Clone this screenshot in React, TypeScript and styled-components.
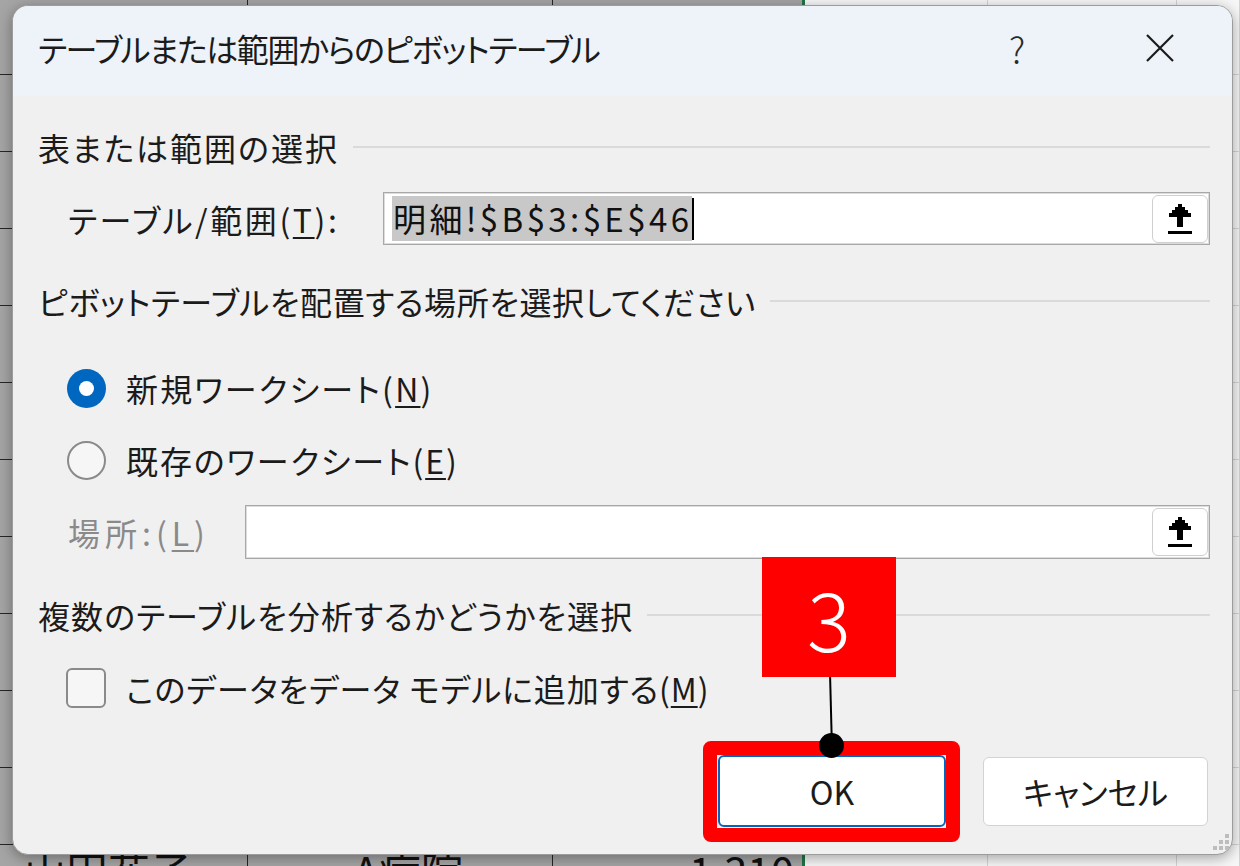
import React from "react";
import styled, { createGlobalStyle } from "styled-components";

const FONT = `"Noto Sans CJK JP", "Noto Sans", sans-serif`;

const Global = createGlobalStyle`
  html, body { margin: 0; padding: 0; width: 1240px; height: 866px; overflow: hidden; background: #f7f7f7; }
  #root { width: 1240px; height: 866px; }
  * { box-sizing: border-box; }
`;

const Page = styled.div`
  position: relative;
  width: 1240px;
  height: 866px;
  overflow: hidden;
  font-family: ${FONT};
  font-feature-settings: "palt";
  color: #1b1b1b;
`;

/* ---------- spreadsheet behind ---------- */
const Sheet = styled.div`
  display: grid;
  grid-template-columns: 248px 305px 252px 183px 189px 1fr;
  grid-auto-rows: 77px;
  margin-top: -2px;
`;

const Cell = styled.div<{ $sel?: boolean; $edge?: boolean; $align?: string }>`
  display: flex;
  align-items: flex-start;
  justify-content: ${(p) => p.$align || "flex-start"};
  padding: 0 8px 0 24px;
  background: ${(p) => (p.$sel ? "#a5a5a5" : "#f7f7f7")};
  border-right: ${(p) => (p.$edge ? "3px solid #217346" : p.$sel ? "1px solid #262626" : "1px solid #d4d4d4")};
  border-bottom: 1px solid ${(p) => (p.$sel ? "#262626" : "#d4d4d4")};
  font-size: 42px;
  line-height: 1.2;
  color: #111;
  white-space: nowrap;
`;

/* ---------- dialog ---------- */
const Dialog = styled.div`
  position: absolute;
  left: 12px;
  top: 5px;
  width: 1221px;
  height: 850px;
  border-radius: 16px;
  background: #f0f0f0;
  border: 1px solid #9c9c9c;
  box-shadow: 0 3px 14px rgba(0, 0, 0, 0.35);
  overflow: hidden;
  display: flex;
  flex-direction: column;
`;

const TitleBar = styled.div`
  height: 90px;
  flex: none;
  background: #eef3f9;
  display: flex;
  align-items: center;
  padding: 0 22px 6px 25px;
`;

const Text = styled.div<{ $ls?: number; $size?: number; $muted?: boolean }>`
  font-size: ${(p) => p.$size || 32}px;
  letter-spacing: ${(p) => p.$ls || 0}px;
  color: ${(p) => (p.$muted ? "#8a8a8a" : "#1b1b1b")};
  white-space: nowrap;
`;

const TitleButton = styled.div<{ $w: number }>`
  width: ${(p) => p.$w}px;
  height: 60px;
  display: flex;
  align-items: center;
  justify-content: center;
  font-size: 36px;
  font-weight: 300;
  color: #2a2a2a;
`;

const HelpButton = styled(TitleButton)`
  margin-left: auto;
  margin-right: 63px;
`;

const Body = styled.div`
  flex: 1;
  display: flex;
  flex-direction: column;
  padding: 26px 22px 0 25px;
  position: relative;
`;

const Row = styled.div<{ $mt?: number; $h?: number; $indent?: number; $gap?: number }>`
  display: flex;
  align-items: center;
  margin-top: ${(p) => p.$mt || 0}px;
  height: ${(p) => p.$h || 50}px;
  padding-left: ${(p) => p.$indent || 0}px;
  gap: ${(p) => p.$gap || 0}px;
  flex: none;
`;

const Rule = styled.div`
  flex: 1;
  height: 2px;
  background: #dadada;
  margin-left: 14px;
`;

const LabelCell = styled.div<{ $w: number }>`
  width: ${(p) => p.$w}px;
  flex: none;
`;

const U = styled.span`
  text-decoration: underline;
  text-underline-offset: 4px;
  text-decoration-thickness: 2px;
`;

const Input = styled.div`
  flex: 1;
  height: 100%;
  background: #fff;
  border: 1px solid #a8a8a8;
  box-shadow: inset 0 0 0 1px #dcdcdc;
  display: flex;
  align-items: center;
  padding: 0 1px 0 8px;
`;

const Selected = styled.span`
  background: #c8c8c8;
  font-size: 33px;
  letter-spacing: 3.4px;
  line-height: 45px;
  padding: 0 0 0 1px;
  color: #111;
`;

const Caret = styled.span`
  width: 2px;
  height: 42px;
  background: #000;
`;

const PickButton = styled.div`
  margin-left: auto;
  width: 56px;
  height: 48px;
  background: #fff;
  border: 1px solid #cfcfcf;
  border-radius: 6px;
  display: flex;
  align-items: center;
  justify-content: center;
`;

const Radio = styled.div<{ $on?: boolean }>`
  width: 39px;
  height: 39px;
  border-radius: 50%;
  flex: none;
  background: ${(p) => (p.$on ? "#0067c0" : "#f6f6f6")};
  border: ${(p) => (p.$on ? "none" : "2px solid #8a8a8a")};
  display: flex;
  align-items: center;
  justify-content: center;
  &::after {
    content: "";
    display: ${(p) => (p.$on ? "block" : "none")};
    width: 15px;
    height: 15px;
    border-radius: 50%;
    background: #fff;
  }
`;

const Check = styled.div`
  width: 40px;
  height: 40px;
  flex: none;
  border-radius: 6px;
  border: 2px solid #8a8a8a;
  background: #f6f6f6;
`;

const Buttons = styled.div`
  display: flex;
  justify-content: flex-end;
  align-items: center;
  gap: 37px;
  margin-top: 42px;
  padding-right: 2px;
  height: 72px;
`;

const Annotated = styled.div`
  position: relative;
  &::before {
    content: "";
    position: absolute;
    inset: -14px -14px -15px -15px;
    border: 14px solid #ff0000;
    border-radius: 8px;
    pointer-events: none;
  }
`;

const DialogButton = styled.div<{ $primary?: boolean }>`
  width: ${(p) => (p.$primary ? 228 : 225)}px;
  height: ${(p) => (p.$primary ? 72 : 69)}px;
  background: #fff;
  border: ${(p) => (p.$primary ? "2px solid #0067c0" : "1px solid #d3d3d3")};
  border-radius: 6px;
  display: flex;
  align-items: center;
  justify-content: center;
  font-size: 32px;
  color: #1b1b1b;
`;

const Callout = styled.div`
  position: absolute;
  left: 44px;
  top: -198px;
  width: 134px;
  height: 120px;
  background: #ff0000;
  color: #fff;
  font-size: 82px;
  font-weight: 300;
  display: flex;
  align-items: center;
  justify-content: center;
  line-height: 1;
`;

const Leader = styled.div`
  position: absolute;
  left: 112px;
  top: -78px;
  width: 2px;
  height: 68px;
  background: #000;
  transform: rotate(-1.5deg);
`;

const Dot = styled.div`
  position: absolute;
  left: 101px;
  top: -22px;
  width: 25px;
  height: 25px;
  border-radius: 50%;
  background: #000;
`;

const Grip = styled.svg`
  position: absolute;
  right: 2px;
  bottom: 3px;
`;

const UploadIcon = () => (
  <svg width="26" height="32" viewBox="0 0 26 32">
    <path
      d="M11 1 h4 v3 h3 v3 h3 v3 h3 v4 h-8 v10 h-6 v-10 h-8 v-4 h3 v-3 h3 v-3 h3 z"
      fill="#000"
    />
    <rect x="1" y="28" width="24" height="3" fill="#000" />
  </svg>
);

const CloseIcon = () => (
  <svg width="30" height="30" viewBox="0 0 30 30">
    <path d="M2 2 L28 28 M28 2 L2 28" stroke="#1b1b1b" strokeWidth="2.2" fill="none" />
  </svg>
);

const ROWS = 12;
const COLS = 6;
const lastRow: Record<number, string> = { 0: "山田花子", 1: "A病院", 2: "1,310" };

export default function App() {
  const cells: React.ReactNode[] = [];
  for (let r = 0; r < ROWS; r++) {
    for (let c = 0; c < COLS; c++) {
      const text = r === ROWS - 1 ? lastRow[c] : undefined;
      cells.push(
        <Cell
          key={`${r}-${c}`}
          $sel={c < 3}
          $edge={c === 2}
          $align={c === 1 ? "center" : c === 2 ? "flex-end" : "flex-start"}
        >
          {text}
        </Cell>
      );
    }
  }

  return (
    <Page>
      <Global />
      <Sheet>{cells}</Sheet>

      <Dialog>
        <TitleBar>
          <Text $ls={-1.4}>テーブルまたは範囲からのピボットテーブル</Text>
          <HelpButton $w={60}>?</HelpButton>
          <TitleButton $w={100}>
            <CloseIcon />
          </TitleButton>
        </TitleBar>

        <Body>
          <Row>
            <Text $ls={2}>表または範囲の選択</Text>
            <Rule />
          </Row>

          <Row $mt={20} $h={53} $indent={30}>
            <LabelCell $w={315}>
              <Text $ls={2.6}>
                テーブル/範囲(<U>T</U>):
              </Text>
            </LabelCell>
            <Input>
              <Selected>明細!$B$3:$E$46</Selected>
              <Caret />
              <PickButton>
                <UploadIcon />
              </PickButton>
            </Input>
          </Row>

          <Row $mt={31}>
            <Text $ls={0.6}>ピボットテーブルを配置する場所を選択してください</Text>
            <Rule />
          </Row>

          <Row $mt={37} $indent={29} $gap={20}>
            <Radio $on />
            <Text $ls={2.2}>
              新規ワークシート(<U>N</U>)
            </Text>
          </Row>

          <Row $mt={22} $indent={29} $gap={20}>
            <Radio />
            <Text $ls={1.9}>
              既存のワークシート(<U>E</U>)
            </Text>
          </Row>

          <Row $mt={20} $h={54} $indent={30}>
            <LabelCell $w={177}>
              <Text $ls={5} $muted>
                場所:(<U>L</U>)
              </Text>
            </LabelCell>
            <Input>
              <PickButton>
                <UploadIcon />
              </PickButton>
            </Input>
          </Row>

          <Row $mt={31}>
            <Text $ls={1.1}>複数のテーブルを分析するかどうかを選択</Text>
            <Rule />
          </Row>

          <Row $mt={23} $indent={28} $gap={20}>
            <Check />
            <Text $ls={0.9}>
              このデータをデータ モデルに追加する(<U>M</U>)
            </Text>
          </Row>

          <Buttons>
            <Annotated>
              <DialogButton $primary>OK</DialogButton>
              <Callout>3</Callout>
              <Leader />
              <Dot />
            </Annotated>
            <DialogButton>キャンセル</DialogButton>
          </Buttons>

          <Grip width="18" height="18" viewBox="0 0 18 18">
            <rect x="13" y="1" width="4" height="4" fill="#bdbdbd" />
            <rect x="7" y="7" width="4" height="4" fill="#bdbdbd" />
            <rect x="13" y="7" width="4" height="4" fill="#bdbdbd" />
            <rect x="1" y="13" width="4" height="4" fill="#bdbdbd" />
            <rect x="7" y="13" width="4" height="4" fill="#bdbdbd" />
            <rect x="13" y="13" width="4" height="4" fill="#bdbdbd" />
          </Grip>
        </Body>
      </Dialog>
    </Page>
  );
}
